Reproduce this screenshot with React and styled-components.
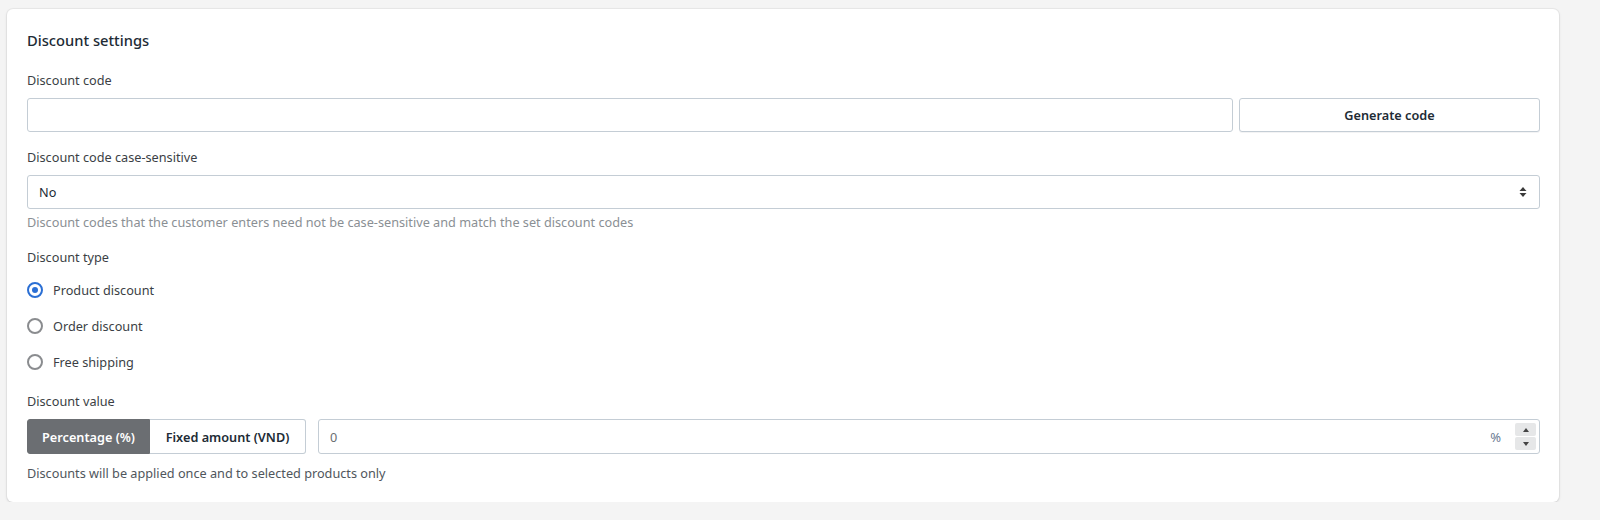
import { useState } from "react";
import styled, { createGlobalStyle } from "styled-components";

const Global = createGlobalStyle`
  body {
    margin: 0;
    padding: 9px 41px 0 7px;
    background: #f4f4f4;
    font-family: "Noto Sans", "Open Sans", sans-serif;
    color: #212b35;
  }
`

function App() {
  const [type, setType] = useState("product")
  const [unit, setUnit] = useState("percent")
  return (
    <>
      <Global />
      <Card>
        <Title>Discount settings</Title>
        <Label>Discount code</Label>
        <CodeRow>
          <TextInput type="text" />
          <GenButton>Generate code</GenButton>
        </CodeRow>
        <Label $top={16}>Discount code case-sensitive</Label>
        <SelectBox>
          <span>No</span>
          <svg width="8" height="12" viewBox="0 0 8 12">
            <path d="M4 1 L7.5 5 H0.5 Z" fill="#3a3a3a" />
            <path d="M4 11 L7.5 7 H0.5 Z" fill="#3a3a3a" />
          </svg>
        </SelectBox>
        <Help>Discount codes that the customer enters need not be case-sensitive and match the set discount codes</Help>
        <Label $top={17}>Discount type</Label>
        <Radios>
          {[
            ["product", "Product discount"],
            ["order", "Order discount"],
            ["shipping", "Free shipping"],
          ].map(([k, text]) => (
            <RadioRow key={k} onClick={() => setType(k)}>
              <RadioDot $on={type === k} />
              {text}
            </RadioRow>
          ))}
        </Radios>
        <Label $top={21}>Discount value</Label>
        <ValueRow>
          <Segment>
            <SegButton $w={123} $on={unit === "percent"} onClick={() => setUnit("percent")}>Percentage (%)</SegButton>
            <SegButton $w={156} $on={unit === "fixed"} onClick={() => setUnit("fixed")}>Fixed amount (VND)</SegButton>
          </Segment>
          <NumberBox>
            <span>0</span>
            <Suffix>%</Suffix>
            <Spinner>
              <SpinBtn>
                <svg width="6" height="4" viewBox="0 0 6 4"><path d="M3 0 L6 4 H0 Z" fill="#444" /></svg>
              </SpinBtn>
              <SpinBtn>
                <svg width="6" height="4" viewBox="0 0 6 4"><path d="M3 4 L6 0 H0 Z" fill="#444" /></svg>
              </SpinBtn>
            </Spinner>
          </NumberBox>
        </ValueRow>
        <Help $top={10} $dark>Discounts will be applied once and to selected products only</Help>
      </Card>
    </>
  )
}

const Card = styled.div`
  background: #fff;
  border-radius: 6px;
  box-shadow: 0 0 0 1px rgba(63, 63, 68, 0.05), 0 1px 3px 0 rgba(63, 63, 68, 0.15);
  padding: 21px 19px 20px 20px;
  display: flex;
  flex-direction: column;
`
const Title = styled.div`
  font-size: 14.7px;
  line-height: 20px;
  font-weight: 500;
  color: #212b35;
`
const Label = styled.div`
  font-size: 12.7px;
  line-height: 18px;
  color: #3b3f45;
  margin-top: ${p => p.$top || 21}px;
  margin-bottom: 9px;
`
const CodeRow = styled.div`
  display: flex;
  gap: 6px;
`
const TextInput = styled.input`
  flex: 1;
  height: 34px;
  box-sizing: border-box;
  border: 1px solid #c4cdd5;
  border-radius: 3px;
  font: inherit;
  outline: none;
`
const GenButton = styled.button`
  width: 301px;
  height: 34px;
  background: #fff;
  border: 1px solid #c4cdd5;
  border-radius: 3px;
  font-family: inherit;
  font-size: 12.7px;
  font-weight: 600;
  color: #212b35;
  box-shadow: 0 1px 0 rgba(22, 29, 37, 0.05);
`
const SelectBox = styled.div`
  height: 34px;
  box-sizing: border-box;
  border: 1px solid #c4cdd5;
  border-radius: 3px;
  display: flex;
  align-items: center;
  justify-content: space-between;
  padding: 0 12px 0 11px;
  font-size: 12.7px;
  color: #212b35;
`
const Help = styled.div`
  font-size: 12.7px;
  line-height: 18px;
  color: ${p => (p.$dark ? "#50565c" : "#8a8f94")};
  margin-top: ${p => p.$top || 4}px;
`
const Radios = styled.div`
  display: flex;
  flex-direction: column;
  gap: 18px;
  margin-top: 6px;
`
const RadioRow = styled.label`
  display: flex;
  align-items: center;
  gap: 10px;
  font-size: 12.7px;
  line-height: 18px;
  color: #3b3f45;
  cursor: pointer;
`
const RadioDot = styled.span`
  width: 16px;
  height: 16px;
  box-sizing: border-box;
  border-radius: 50%;
  border: 2px solid ${p => (p.$on ? "#2b6fd4" : "#8a8c8f")};
  display: flex;
  align-items: center;
  justify-content: center;
  &::after {
    content: "";
    width: 6px;
    height: 6px;
    border-radius: 50%;
    background: ${p => (p.$on ? "#2b6fd4" : "transparent")};
  }
`
const ValueRow = styled.div`
  display: flex;
  gap: 12px;
`
const Segment = styled.div`
  display: flex;
`
const SegButton = styled.button`
  width: ${p => p.$w}px;
  height: 35px;
  padding: 0;
  font-family: inherit;
  font-size: 12.7px;
  font-weight: 600;
  border: 1px solid ${p => (p.$on ? "#6b6e72" : "#c4cdd5")};
  background: ${p => (p.$on ? "#6b6e72" : "#fff")};
  color: ${p => (p.$on ? "#fff" : "#212b35")};
  &:first-child {
    border-radius: 3px 0 0 3px;
  }
  &:last-child {
    border-radius: 0 3px 3px 0;
    border-left: none;
  }
`
const NumberBox = styled.div`
  flex: 1;
  height: 35px;
  box-sizing: border-box;
  border: 1px solid #c4cdd5;
  border-radius: 3px;
  display: flex;
  align-items: center;
  padding: 0 3px 0 11px;
  font-size: 12.7px;
  color: #6b6e72;
  span:first-child {
    flex: 1;
  }
`
const Suffix = styled.span`
  color: #6b7c93;
  font-size: 13px;
  margin-right: 14px;
`
const Spinner = styled.div`
  display: flex;
  flex-direction: column;
  gap: 1px;
`
const SpinBtn = styled.div`
  width: 21px;
  height: 13px;
  background: #e6e7e8;
  border-radius: 2px;
  display: flex;
  align-items: center;
  justify-content: center;
`

export default App
